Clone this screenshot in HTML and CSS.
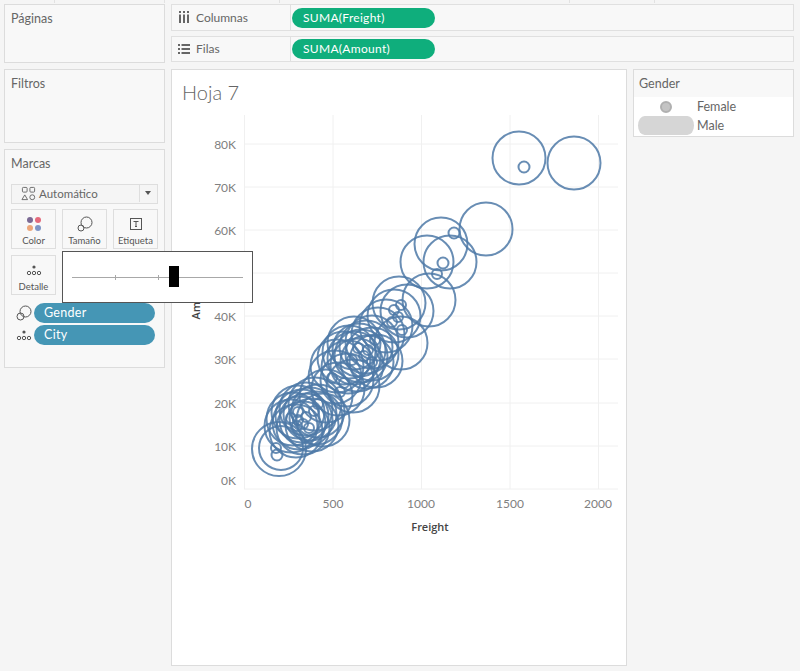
FILE: index.html
```html
<!DOCTYPE html>
<html lang="es">
<head>
    <meta charset="UTF-8">
    <title>Hoja 7</title>
    <link rel="stylesheet" href="styles.css">
</head>
<body>
    <!-- bottom edge of the toolbar, mostly cropped away -->
    <div class="topbar">
        <span class="topbar-item item-a"></span>
        <span class="topbar-item item-b"></span>
        <span class="topbar-item item-c"></span>
        <span class="topbar-item item-d"></span>
        <span class="topbar-item item-e"></span>
    </div>

    <div class="workbook">
        <!-- left side cards -->
        <aside class="side">
            <section class="card card-pages"><h3>Páginas</h3></section>
            <section class="card card-filters"><h3>Filtros</h3></section>
            <section class="card card-marks">
                <h3>Marcas</h3>
                <div class="mark-select">
                    <svg class="select-icon" width="16" height="16" viewBox="0 0 16 16" fill="none" stroke="#666" stroke-width="1">
                        <rect x="1.5" y="1.5" width="5" height="5" rx="1"/>
                        <rect x="9.5" y="1.5" width="5" height="5" rx="1"/>
                        <path d="M4 9.5l3 5H1z"/>
                        <circle cx="12" cy="12" r="2.6"/>
                    </svg>
                    <span class="select-text">Automático</span>
                    <span class="select-arrow"></span>
                </div>
                <div class="mark-buttons">
                    <div class="mark-btn">
                        <svg width="16" height="16" viewBox="0 0 16 16">
                            <circle cx="4" cy="4" r="3" fill="#7b6a94"/>
                            <circle cx="12" cy="4" r="3" fill="#e46a7c"/>
                            <circle cx="4" cy="12" r="3" fill="#eda67a"/>
                            <circle cx="12" cy="12" r="3" fill="#7f95c6"/>
                        </svg>
                        <span>Color</span>
                    </div>
                    <div class="mark-btn">
                        <svg width="16" height="16" viewBox="0 0 16 16" fill="none" stroke="#555">
                            <circle cx="9.5" cy="6.5" r="5.5"/>
                            <circle cx="4" cy="12" r="3"/>
                        </svg>
                        <span>Tamaño</span>
                    </div>
                    <div class="mark-btn">
                        <svg width="16" height="16" viewBox="0 0 16 16" fill="none" stroke="#555">
                            <rect x="2.5" y="2.5" width="11" height="11"/>
                            <path d="M5.5 5.5h5M8 5.5v5M7 10.5h2"/>
                        </svg>
                        <span>Etiqueta</span>
                    </div>
                    <div class="mark-btn">
                        <svg width="16" height="16" viewBox="0 0 16 16" fill="none" stroke="#555">
                            <circle cx="8" cy="5" r="1.6" fill="#555" stroke="none"/>
                            <circle cx="3" cy="11" r="1.7"/>
                            <circle cx="8" cy="11" r="1.7"/>
                            <circle cx="13" cy="11" r="1.7"/>
                        </svg>
                        <span>Detalle</span>
                    </div>
                </div>
                <div class="mark-fields">
                    <div class="mark-field">
                        <svg width="16" height="16" viewBox="0 0 16 16" fill="none" stroke="#555">
                            <circle cx="9.5" cy="6.5" r="5.5"/>
                            <circle cx="4.5" cy="11.5" r="3.5"/>
                        </svg>
                        <span class="pill pill-blue">Gender</span>
                    </div>
                    <div class="mark-field">
                        <svg width="16" height="16" viewBox="0 0 16 16" fill="none" stroke="#555">
                            <circle cx="8" cy="5" r="1.6" fill="#555" stroke="none"/>
                            <circle cx="3" cy="11" r="1.7"/>
                            <circle cx="8" cy="11" r="1.7"/>
                            <circle cx="13" cy="11" r="1.7"/>
                        </svg>
                        <span class="pill pill-blue">City</span>
                    </div>
                </div>
            </section>
        </aside>

        <main class="main">
            <div class="shelf shelf-columns">
                <div class="shelf-label">
                    <svg width="12" height="12" viewBox="0 0 12 12" fill="#666">
                        <rect x="1" y="0" width="2" height="2"/><rect x="1" y="3.5" width="2" height="8.5"/>
                        <rect x="5" y="0" width="2" height="2"/><rect x="5" y="3.5" width="2" height="8.5"/>
                        <rect x="9" y="0" width="2" height="2"/><rect x="9" y="3.5" width="2" height="8.5"/>
                    </svg>
                    <span>Columnas</span>
                </div>
                <div class="shelf-body"><span class="pill pill-green">SUMA(Freight)</span></div>
            </div>
            <div class="shelf shelf-rows">
                <div class="shelf-label">
                    <svg width="12" height="12" viewBox="0 0 12 12" fill="#666">
                        <rect x="0" y="1" width="2" height="2"/><rect x="3.5" y="1" width="8.5" height="2"/>
                        <rect x="0" y="5" width="2" height="2"/><rect x="3.5" y="5" width="8.5" height="2"/>
                        <rect x="0" y="9" width="2" height="2"/><rect x="3.5" y="9" width="8.5" height="2"/>
                    </svg>
                    <span>Filas</span>
                </div>
                <div class="shelf-body"><span class="pill pill-green">SUMA(Amount)</span></div>
            </div>

            <div class="view-row">
                <section class="sheet">
                    <h1>Hoja 7</h1>
                    <!-- viewBox matches page coordinates so the marks read like the picture -->
                    <svg class="chart" width="454" height="550" viewBox="172 112 454 550">
                        <g class="grid">
                            <path d="M244.5 115V489M333 115V489M421.5 115V489M510 115V489M598.5 115V489"/>
                            <path d="M244 144H618M244 187H618M244 230H618M244 273H618M244 316H618M244 359H618M244 403H618M244 446H618M244 489H618"/>
                        </g>
                        <g class="ticks">
                            <text x="236" y="149">80K</text>
                            <text x="236" y="192">70K</text>
                            <text x="236" y="235">60K</text>
                            <text x="236" y="278">50K</text>
                            <text x="236" y="321">40K</text>
                            <text x="236" y="364">30K</text>
                            <text x="236" y="408">20K</text>
                            <text x="236" y="451">10K</text>
                            <text x="236" y="485">0K</text>
                        </g>
                        <g class="ticks ticks-x">
                            <text x="248" y="508">0</text>
                            <text x="333" y="508">500</text>
                            <text x="421" y="508">1000</text>
                            <text x="510" y="508">1500</text>
                            <text x="598" y="508">2000</text>
                        </g>
                        <text class="axis-title" x="430" y="531">Freight</text>
                        <text class="axis-title" transform="translate(200 298) rotate(-90)">Amount</text>
                        <g class="marks">
                            <circle cx="519" cy="158" r="26.5"/><circle cx="574" cy="163" r="26.5"/><circle cx="524" cy="167" r="5.5"/>
                            <circle cx="486" cy="229" r="26.5"/><circle cx="441" cy="244" r="26.5"/><circle cx="454" cy="233" r="5.5"/>
                            <circle cx="427" cy="262" r="26.5"/><circle cx="450" cy="262" r="26.5"/><circle cx="443" cy="263" r="5.5"/>
                            <circle cx="437" cy="274" r="5"/><circle cx="429" cy="300" r="26.5"/>
                            <circle cx="399" cy="303" r="26.5"/><circle cx="407" cy="311" r="26.5"/>
                            <circle cx="394" cy="316" r="26.5"/><circle cx="401" cy="343" r="26.5"/><circle cx="386" cy="326" r="26.5"/>
                            <circle cx="401" cy="305" r="5"/><circle cx="394" cy="310" r="5"/><circle cx="402" cy="330" r="5"/>
                            <circle cx="392" cy="322" r="5"/><circle cx="398" cy="317" r="5"/>
                            <circle cx="378" cy="334" r="26.5"/><circle cx="372" cy="342" r="26.5"/>
                            <circle cx="354" cy="343" r="26.5"/><circle cx="366" cy="347" r="26.5"/><circle cx="359" cy="350" r="26.5"/>
                            <circle cx="349" cy="352" r="26.5"/><circle cx="372" cy="354" r="26.5"/><circle cx="361" cy="356" r="26.5"/>
                            <circle cx="354" cy="358" r="26.5"/><circle cx="344" cy="358" r="26.5"/><circle cx="367" cy="362" r="26.5"/>
                            <circle cx="376" cy="361" r="26.5"/><circle cx="357" cy="365" r="26.5"/><circle cx="348" cy="367" r="26.5"/>
                            <circle cx="368" cy="350" r="5"/><circle cx="358" cy="348" r="5"/><circle cx="372" cy="362" r="5"/>
                            <circle cx="352" cy="360" r="5"/><circle cx="364" cy="356" r="5"/><circle cx="375" cy="340" r="5"/>
                            <circle cx="337" cy="366" r="26.5"/><circle cx="335" cy="377" r="26.5"/><circle cx="347" cy="380" r="26.5"/>
                            <circle cx="353" cy="386" r="26.5"/><circle cx="338" cy="389" r="26.5"/>
                            <circle cx="340" cy="392" r="5"/><circle cx="332" cy="378" r="5"/><circle cx="344" cy="383" r="5"/>
                            <circle cx="323" cy="420" r="26.5"/><circle cx="326" cy="396" r="26.5"/>
                            <circle cx="315" cy="404" r="26.5"/><circle cx="306" cy="409" r="26.5"/><circle cx="318" cy="411" r="26.5"/>
                            <circle cx="298" cy="412" r="26.5"/><circle cx="310" cy="414" r="26.5"/><circle cx="302" cy="416" r="26.5"/>
                            <circle cx="316" cy="418" r="26.5"/><circle cx="293" cy="419" r="26.5"/><circle cx="306" cy="420" r="26.5"/>
                            <circle cx="299" cy="423" r="26.5"/><circle cx="312" cy="425" r="26.5"/><circle cx="291" cy="426" r="26.5"/>
                            <circle cx="303" cy="428" r="26.5"/><circle cx="296" cy="431" r="26.5"/>
                            <circle cx="298" cy="420" r="5"/><circle cx="306" cy="417" r="5"/><circle cx="314" cy="411" r="5"/>
                            <circle cx="309" cy="428" r="5"/><circle cx="298" cy="412" r="5"/><circle cx="318" cy="404" r="5"/>
                            <circle cx="291" cy="418" r="5"/><circle cx="303" cy="424" r="5"/><circle cx="297" cy="426" r="5"/>
                            <circle cx="279" cy="449" r="27"/><circle cx="281" cy="448" r="22"/><circle cx="276" cy="448" r="5"/><circle cx="277" cy="455" r="5.5"/>
                        </g>
                    </svg>
                </section>
                <section class="card legend">
                    <h3>Gender</h3>
                    <div class="legend-list">
                        <div class="legend-row">
                            <span class="legend-key"><span class="dot-small"></span></span>
                            <span>Female</span>
                        </div>
                        <div class="legend-row">
                            <span class="legend-key"><span class="dot-big"></span></span>
                            <span>Male</span>
                        </div>
                    </div>
                </section>
            </div>
        </main>
    </div>

    <!-- size slider popup, open over the marks card -->
    <div class="size-popup">
        <div class="slider-track">
            <span class="slider-tick tick-one"></span>
            <span class="slider-tick tick-two"></span>
            <span class="slider-thumb"></span>
        </div>
    </div>
</body>
</html>
```

FILE: styles.css
```css
* {
    box-sizing: border-box;
}

html, body {
    margin: 0;
    height: 100%;
}

body {
    font-family: 'Lato', sans-serif;
    font-size: 12px;
    color: #666666;
    background-color: #f5f5f5;
    overflow: hidden;
    position: relative;
}

h3 {
    margin: 0;
    height: 15px;
    line-height: 15px;
    font-size: 12.5px;
    font-weight: 400;
    color: #666666;
}

/* Toolbar remains */
.topbar {
    display: flex;
    height: 3px;
}

.topbar-item {
    border-right: 1px solid #e2e2e2;
}

.item-a {
    width: 55px;
}

.item-b {
    width: 110px;
}

.item-c {
    width: 115px;
}

.item-d {
    width: 290px;
}

.item-e {
    width: 85px;
}

.workbook {
    display: flex;
    gap: 6px;
    padding: 1px 6px 5px 4px;
    height: 668px;
}

/* Left side */
.side {
    width: 161px;
    display: flex;
    flex-direction: column;
    gap: 6px;
    flex-shrink: 0;
}

.card {
    background-color: #f8f8f8;
    border: 1px solid #dcdcdc;
    padding: 6px;
}

.card-pages {
    height: 59px;
}

.card-filters {
    height: 74px;
}

.card-marks {
    height: 219px;
}

.mark-select {
    display: flex;
    align-items: center;
    height: 20px;
    margin-top: 13px;
    padding-bottom: 2px;
    background-color: #f5f5f5;
    border: 1px solid #dedede;
    font-size: 11.5px;
    padding-left: 9px;
}

.select-icon {
    width: 15px;
    height: 15px;
}

.select-text {
    margin-left: 3px;
    flex: 1;
}

.select-arrow {
    width: 18px;
    height: 18px;
    border-left: 1px solid #dedede;
    position: relative;
}

.select-arrow:after {
    content: "";
    position: absolute;
    left: 5px;
    top: 7px;
    border-left: 3.5px solid transparent;
    border-right: 3.5px solid transparent;
    border-top: 4px solid #555555;
}

.mark-buttons {
    display: grid;
    grid-template-columns: repeat(3, 45px);
    grid-auto-rows: 40px;
    gap: 6px;
    margin-top: 5px;
}

.mark-btn {
    display: flex;
    flex-direction: column;
    align-items: center;
    justify-content: flex-end;
    gap: 3px;
    padding-bottom: 2px;
    background-color: #f8f8f8;
    border: 1px solid #dedede;
    font-size: 9.5px;
    color: #555555;
}

.mark-fields {
    display: flex;
    flex-direction: column;
    gap: 2px;
    margin-top: 8px;
}

.mark-field {
    display: flex;
    align-items: center;
    justify-content: flex-end;
    gap: 2px;
    width: 144px;
}

/* Pills */
.pill {
    display: block;
    color: #ffffff;
    font-weight: 400;
    border-radius: 10px;
    height: 20px;
    line-height: 19px;
    letter-spacing: 0.3px;
}

.pill-blue {
    width: 121px;
    padding-left: 10px;
    background-color: #4596b5;
    font-size: 12.5px;
}

.pill-green {
    width: 143px;
    padding-left: 11px;
    background-color: #0fae7c;
    font-size: 12px;
}

/* Shelves */
.main {
    flex: 1;
    display: flex;
    flex-direction: column;
    min-width: 0;
}

.shelf {
    display: flex;
    background-color: #f8f8f8;
    border: 1px solid #e0e0e0;
}

.shelf-columns {
    height: 27px;
    margin-bottom: 5px;
}

.shelf-rows {
    height: 26px;
    margin-bottom: 7px;
}

.shelf-label {
    width: 119px;
    display: flex;
    align-items: center;
    gap: 6px;
    padding-left: 6px;
    padding-bottom: 1px;
    border-right: 1px solid #e0e0e0;
    font-size: 12px;
}

.shelf-body {
    flex: 1;
    display: flex;
    align-items: center;
    padding-left: 1px;
}

/* Sheet and legend */
.view-row {
    display: flex;
    gap: 6px;
    align-items: flex-start;
    flex: 1;
}

.sheet {
    width: 456px;
    height: 597px;
    background-color: #ffffff;
    border: 1px solid #dcdcdc;
}

.sheet h1 {
    margin: 10px 0 0 10px;
    height: 24px;
    font-size: 20px;
    font-weight: 300;
    line-height: 24px;
    color: #666666;
}

.chart {
    display: block;
    margin-top: 8px;
}

.grid path {
    fill: none;
    stroke: #f0f0f0;
    stroke-width: 1;
}

.ticks text {
    font-size: 12px;
    fill: #808080;
    text-anchor: end;
}

.ticks-x text {
    text-anchor: middle;
}

.axis-title {
    font-family: 'Open Sans', sans-serif;
    font-size: 11px;
    font-weight: 600;
    fill: #444444;
    text-anchor: middle;
}

.marks circle {
    fill: none;
    stroke: #4e79a7;
    stroke-width: 2;
    stroke-opacity: 0.85;
}

.legend {
    flex: 1;
    height: 68px;
    padding: 0;
    border-color: #dcdcdc;
}

.legend h3 {
    padding: 0 5px;
    margin-top: 6px;
    margin-bottom: 6px;
}

.legend-list {
    background-color: #ffffff;
    height: 39px;
}

.legend-row {
    display: flex;
    align-items: center;
    height: 19px;
    font-size: 12.5px;
    color: #666666;
}

.legend-key {
    width: 63px;
    display: flex;
    justify-content: center;
}

.dot-small {
    width: 12px;
    height: 12px;
    border-radius: 50%;
    background-color: #c4c4c4;
    border: 2px solid #b0b0b0;
}

.dot-big {
    width: 56px;
    height: 19px;
    border-radius: 7px / 10px;
    background-color: #d6d6d6;
}

/* Size popup */
.size-popup {
    position: absolute;
    left: 62px;
    top: 251px;
    width: 191px;
    height: 52px;
    padding: 0 9px;
    display: flex;
    align-items: center;
    background-color: #ffffff;
    border: 1px solid #555555;
}

.slider-track {
    position: relative;
    width: 100%;
    height: 1px;
    background-color: #a8a8a8;
}

.slider-tick {
    position: absolute;
    top: -2px;
    width: 1px;
    height: 5px;
    background-color: #a8a8a8;
}

.tick-one {
    left: 43px;
}

.tick-two {
    left: 86px;
}

.slider-thumb {
    position: absolute;
    left: 97px;
    top: -11px;
    width: 10px;
    height: 21px;
    background-color: #000000;
}
```
